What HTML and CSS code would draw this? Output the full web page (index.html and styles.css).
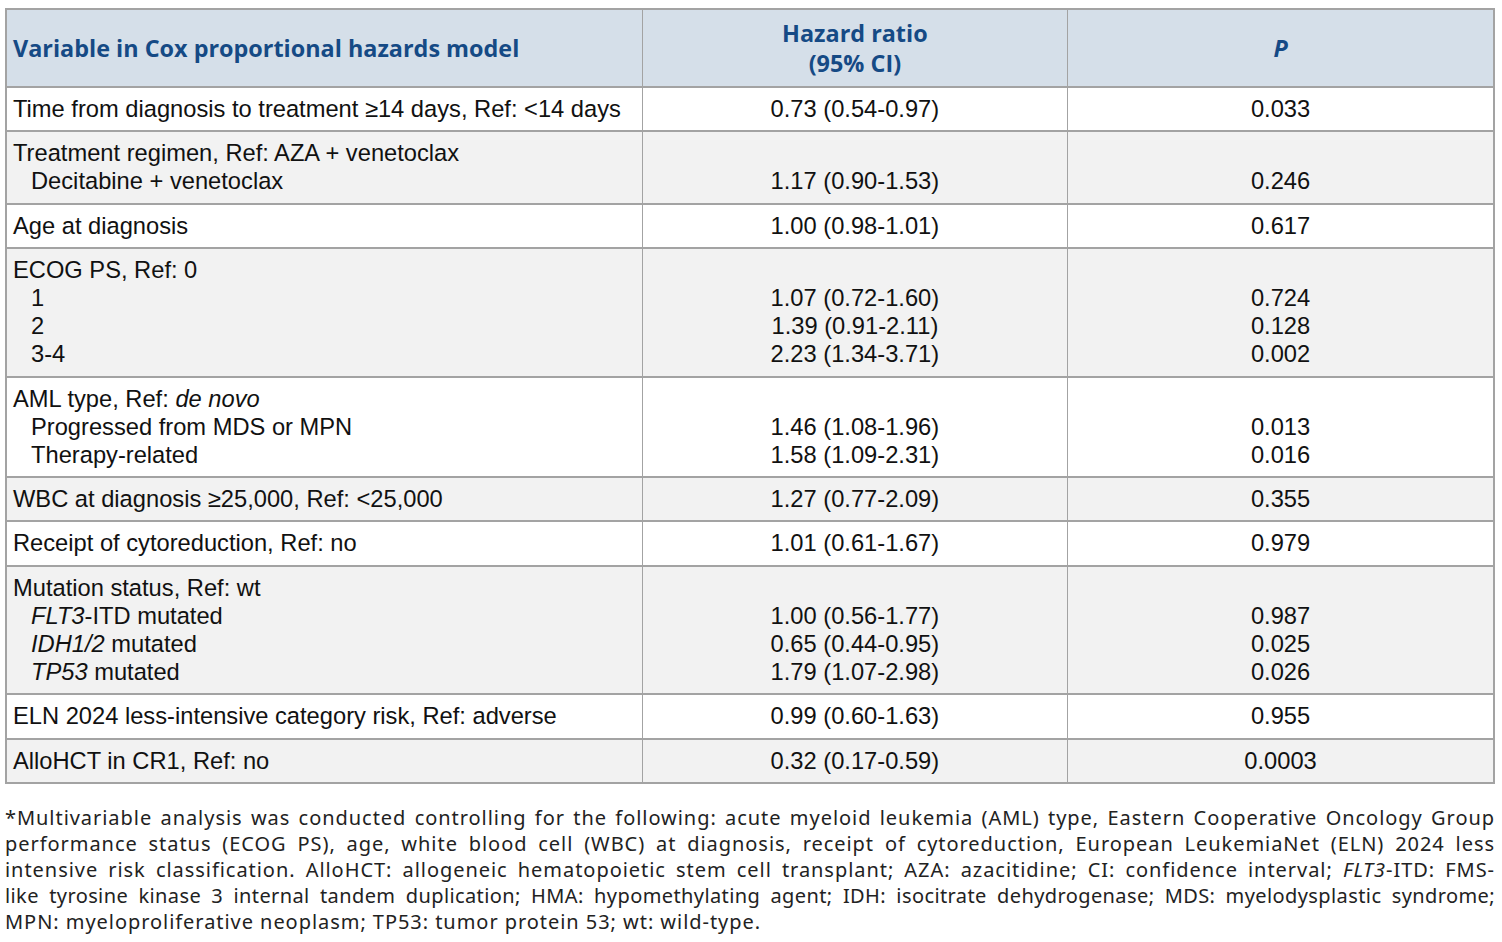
FILE: index.html
```html
<!DOCTYPE html>
<html>
<head>
<meta charset="utf-8">
<link rel="stylesheet" href="styles.css">
</head>
<body>
<div class="page">
<table class="tbl">
  <colgroup><col class="c1"><col class="c2"><col class="c3"></colgroup>
  <thead>
    <tr>
      <th class="left">Variable in Cox proportional hazards model</th>
      <th>Hazard ratio<br>(95% CI)</th>
      <th><i>P</i></th>
    </tr>
  </thead>
  <tbody>
    <tr class="w">
      <td>Time from diagnosis to treatment ≥14 days, Ref: &lt;14 days</td>
      <td class="v">0.73 (0.54-0.97)</td>
      <td class="v">0.033</td>
    </tr>
    <tr class="g">
      <td><div>Treatment regimen, Ref: AZA + venetoclax</div><div class="ind">Decitabine + venetoclax</div></td>
      <td class="v"><div>&nbsp;</div><div>1.17 (0.90-1.53)</div></td>
      <td class="v"><div>&nbsp;</div><div>0.246</div></td>
    </tr>
    <tr class="w">
      <td>Age at diagnosis</td>
      <td class="v">1.00 (0.98-1.01)</td>
      <td class="v">0.617</td>
    </tr>
    <tr class="g">
      <td><div>ECOG PS, Ref: 0</div><div class="ind">1</div><div class="ind">2</div><div class="ind">3-4</div></td>
      <td class="v"><div>&nbsp;</div><div>1.07 (0.72-1.60)</div><div>1.39 (0.91-2.11)</div><div>2.23 (1.34-3.71)</div></td>
      <td class="v"><div>&nbsp;</div><div>0.724</div><div>0.128</div><div>0.002</div></td>
    </tr>
    <tr class="w">
      <td><div>AML type, Ref: <i>de novo</i></div><div class="ind">Progressed from MDS or MPN</div><div class="ind">Therapy-related</div></td>
      <td class="v"><div>&nbsp;</div><div>1.46 (1.08-1.96)</div><div>1.58 (1.09-2.31)</div></td>
      <td class="v"><div>&nbsp;</div><div>0.013</div><div>0.016</div></td>
    </tr>
    <tr class="g">
      <td>WBC at diagnosis ≥25,000, Ref: &lt;25,000</td>
      <td class="v">1.27 (0.77-2.09)</td>
      <td class="v">0.355</td>
    </tr>
    <tr class="w">
      <td>Receipt of cytoreduction, Ref: no</td>
      <td class="v">1.01 (0.61-1.67)</td>
      <td class="v">0.979</td>
    </tr>
    <tr class="g">
      <td><div>Mutation status, Ref: wt</div><div class="ind"><i>FLT3</i>-ITD mutated</div><div class="ind"><i>IDH1/2</i> mutated</div><div class="ind"><i>TP53</i> mutated</div></td>
      <td class="v"><div>&nbsp;</div><div>1.00 (0.56-1.77)</div><div>0.65 (0.44-0.95)</div><div>1.79 (1.07-2.98)</div></td>
      <td class="v"><div>&nbsp;</div><div>0.987</div><div>0.025</div><div>0.026</div></td>
    </tr>
    <tr class="w">
      <td>ELN 2024 less-intensive category risk, Ref: adverse</td>
      <td class="v">0.99 (0.60-1.63)</td>
      <td class="v">0.955</td>
    </tr>
    <tr class="g">
      <td>AlloHCT in CR1, Ref: no</td>
      <td class="v">0.32 (0.17-0.59)</td>
      <td class="v">0.0003</td>
    </tr>
  </tbody>
</table>
<p class="note">*Multivariable analysis was conducted controlling for the following: acute myeloid leukemia (AML) type, Eastern Cooperative Oncology Group performance status (ECOG PS), age, white blood cell (WBC) at diagnosis, receipt of cytoreduction, European LeukemiaNet (ELN) 2024 less intensive risk classification. AlloHCT: allogeneic hematopoietic stem cell transplant; AZA: azacitidine; CI: confidence interval; <i>FLT3</i>-ITD: FMS-&#8203;<span class="tight">like&nbsp;tyrosine kinase 3 internal tandem duplication; HMA: hypomethylating agent; IDH: isocitrate dehydrogenase; MDS: myelodysplastic syndrome;</span> MPN:&nbsp;myeloproliferative neoplasm; TP53: tumor protein 53; wt: wild-type.</p>
</div>
</body>
</html>
```

FILE: styles.css
```css
html, body {
  margin: 0;
  padding: 0;
  background: #ffffff;
}
.page {
  padding: 8px 7px 0 5px;
}
.tbl {
  width: 1490px;
  border-collapse: collapse;
  border: 2px solid #a3a3a3;
  font-family: "Liberation Sans", Arial, sans-serif;
  font-size: 23.7px;
  color: #111111;
}
.c1 { width: 637px; }
.c2 { width: 426px; }
.c3 { width: 427px; }
.tbl th {
  background: #d5dfe9;
  color: #154a85;
  font-family: "Open Sans", "Noto Sans", sans-serif;
  font-weight: 700;
  font-size: 23.4px;
  line-height: 30px;
  height: 76px;
  padding: 0 6px;
  text-align: center;
  border: 1px solid #a3a3a3;
  border-bottom: 2px solid #a3a3a3;
}
.tbl th.left { text-align: left; }
.tbl td {
  padding: 7px 6px;
  line-height: 28.2px;
  vertical-align: top;
  border: 2px solid #a3a3a3;
  border-left-width: 1px;
  border-right-width: 1px;
}
.tbl td.v { text-align: center; }
.w td { background: #ffffff; }
.g td { background: #f2f2f2; }
.ind { padding-left: 18px; }
.note {
  margin: 21px 0 0 0;
  width: 1490px;
  font-family: "Noto Sans", "Open Sans", sans-serif;
  font-size: 20px;
  letter-spacing: 0.95px;
  line-height: 26px;
  color: #222222;
  text-align: justify;
}
.note .tight {
  letter-spacing: 0.4px;
}
```
